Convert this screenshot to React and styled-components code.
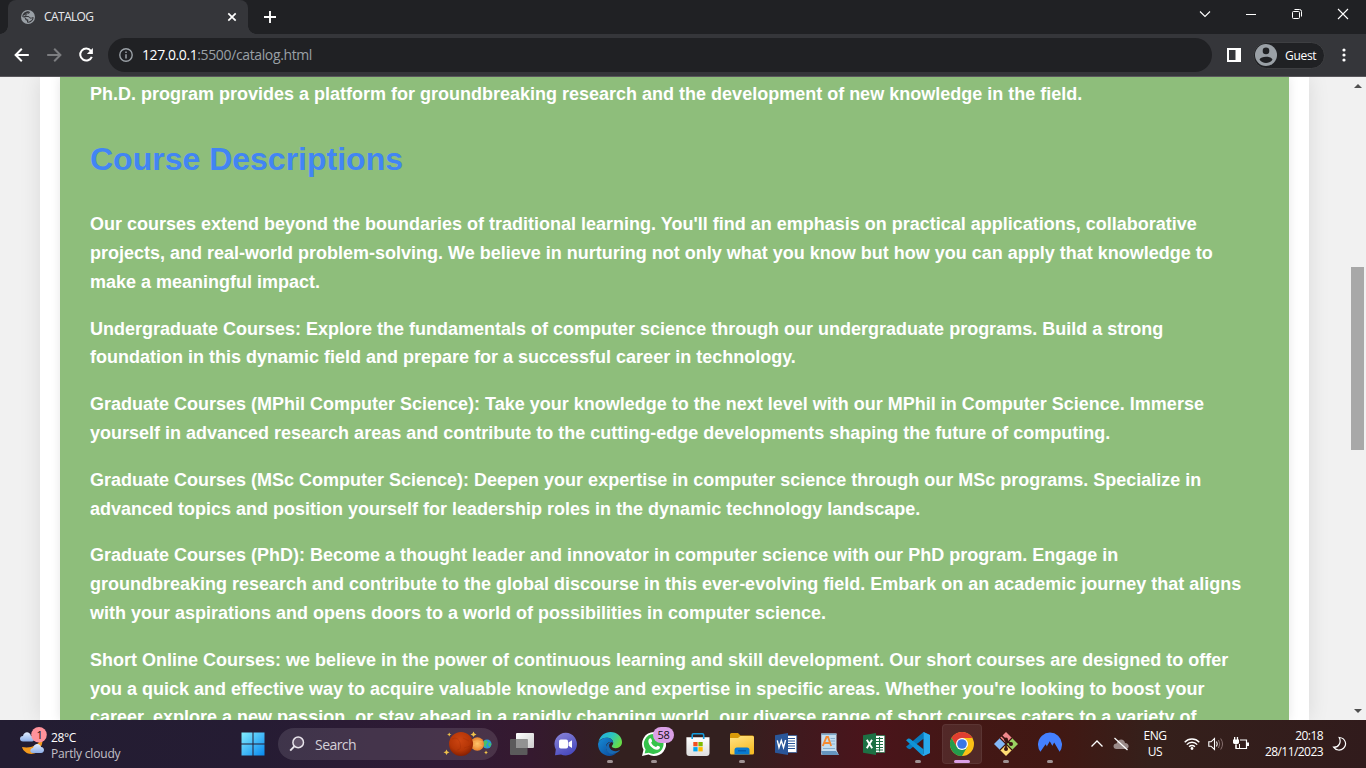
import React from 'react';
import styled, { createGlobalStyle } from 'styled-components';

const GlobalStyle = createGlobalStyle`
  * { box-sizing: border-box; }
  html, body { margin: 0; padding: 0; overflow: hidden; }
  body { font-family: "Open Sans", "Noto Sans", sans-serif; }
  svg { display: block; flex: none; }
`;

const Screen = styled.div`
  width: 1366px;
  height: 768px;
  display: flex;
  flex-direction: column;
  overflow: hidden;
`;

/* Browser chrome */
const TabStrip = styled.header`
  height: 34px;
  flex: none;
  display: flex;
  align-items: stretch;
  background: #202124;
  padding-left: 8px;
`;
const Tab = styled.div`
  position: relative;
  width: 240px;
  display: flex;
  align-items: center;
  padding: 0 10px 0 12px;
  background: #35363a;
  border-radius: 8px 8px 0 0;
  color: #e8eaed;
  font-size: 12px;
  &::before, &::after {
    content: "";
    position: absolute;
    bottom: 0;
    width: 8px;
    height: 8px;
  }
  &::before { left: -8px; background: radial-gradient(circle at 0 0, #202124 7.5px, #35363a 8px); }
  &::after { right: -8px; background: radial-gradient(circle at 100% 0, #202124 7.5px, #35363a 8px); }
`;
const TabTitle = styled.span`
  flex: 1;
  margin-left: 8px;
  padding-bottom: 1px;
  line-height: 16px;
  letter-spacing: -0.6px;
`;
const NewTab = styled.div`
  display: flex;
  align-items: center;
  margin-left: 15px;
`;
const WindowControls = styled.div`
  margin-left: auto;
  display: flex;
  height: 28px;
`;
const WindowButton = styled.div`
  width: 46px;
  display: grid;
  place-items: center;
`;
const Toolbar = styled.div`
  height: 43px;
  flex: none;
  display: flex;
  align-items: center;
  background: #35363a;
  border-bottom: 1px solid #59575c;
  padding-left: 14px;
`;
const NavIcons = styled.div`
  display: flex;
  gap: 16px;
`;
const AddressBar = styled.div`
  width: 1104px;
  height: 34px;
  margin-left: 14px;
  padding-left: 10px;
  border-radius: 17px;
  background: #202124;
  display: flex;
  align-items: center;
  gap: 8px;
`;
const Url = styled.span`
  font-size: 14px;
  line-height: 20px;
  letter-spacing: -0.37px;
  color: #9aa0a6;
`;
const Host = styled.span`
  color: #fff;
  letter-spacing: -0.42px;
`;
const Profile = styled.div`
  width: 72px;
  height: 27px;
  margin: 0 16px 0 12px;
  border: 1px solid #3e3f42;
  border-radius: 14px;
  background: #202124;
  color: #fff;
  font-size: 12px;
  display: flex;
  align-items: center;
  gap: 8px;
  padding-left: 1px;
  letter-spacing: -0.3px;
`;
const PanelIcon = styled.div`margin-left: 15px;`;

/* Page */
const Viewport = styled.main`
  height: 643px;
  flex: none;
  display: flex;
  background: #f1f1f1;
  overflow: hidden;
`;
const PageArea = styled.div`
  flex: 1;
  padding: 0 40px;
  overflow: hidden;
`;
const Sheet = styled.div`
  height: 643px;
  padding: 0 20px;
  background: #fff;
  box-shadow: 0 0 20px rgba(0, 0, 0, 0.1);
`;
const Catalog = styled.article`
  height: 643px;
  padding: 2.6px 30px 0;
  background: #8ebe7b;
  box-shadow: 0 0 10px rgba(0, 0, 0, 0.1);
  color: #fff;
  font: bold 18px/28.8px "Liberation Sans", Arial, sans-serif;
  overflow: hidden;
`;
const Heading = styled.h2`
  margin: 26px 0 24.6px;
  color: #4285f4;
  font-size: 32px;
  line-height: 51.2px;
`;
const Paragraph = styled.p`
  margin: 0 0 18px;
`;
const Scrollbar = styled.div`
  width: 17px;
  flex: none;
  background: #f1f1f1;
  display: flex;
  flex-direction: column;
  align-items: center;
  padding: 7px 0 7px;
`;
const Arrow = styled.div`
  width: 0;
  height: 0;
  border: 4px solid transparent;
  border-${(p) => (p.$up ? 'bottom' : 'top')}: 4px solid #505050;
  border-${(p) => (p.$up ? 'top' : 'bottom')}-width: 0;
`;
const Thumb = styled.div`
  width: 13px;
  height: 183px;
  margin: 179px 0 auto;
  background: #a8a8a8;
`;

/* Taskbar */
const Taskbar = styled.footer`
  height: 48px;
  flex: none;
  display: flex;
  align-items: center;
  background: linear-gradient(90deg, #231d32 0, #251c33 250px, #301a35 440px, #35192f 530px, #33201f 620px, #33201f 730px, #40191e 800px, #4a141b 870px, #431715 960px, #411813 1060px, #35201b 1150px, #311b1c 1366px);
`;
const Weather = styled.div`
  width: 231px;
  display: flex;
  padding-left: 19px;
  gap: 4px;
  color: #fff;
`;
const WeatherText = styled.div`
  padding-top: 3px;
  font-size: 12px;
  line-height: 16px;
  letter-spacing: -0.35px;
`;
const Condition = styled.div`color: #c3c0c7; letter-spacing: -0.2px;`;
const Slot = styled.div`
  position: relative;
  width: 44px;
  height: 48px;
  flex: none;
  display: grid;
  place-items: center;
`;
const AppList = styled.div`
  display: flex;
  margin-left: 2px;
`;
const ActiveTile = styled.div`
  width: 40px;
  height: 40px;
  display: grid;
  place-items: center;
  border-radius: 4px;
  border: 1px solid rgba(255, 255, 255, 0.06);
  background: rgba(255, 255, 255, 0.08);
`;
const Indicator = styled.span`
  position: absolute;
  bottom: 5px;
  left: 50%;
  width: ${(p) => (p.$active ? 16 : 6)}px;
  height: 3px;
  border-radius: 2px;
  transform: translateX(-50%);
  background: ${(p) => (p.$active ? '#dba0e6' : '#9f9293')};
`;
const Badge = styled.span`
  position: absolute;
  top: 7px;
  left: 21px;
  width: 21px;
  height: 16px;
  border-radius: 8px;
  background: #dba0e6;
  color: #111;
  font-size: 11px;
  line-height: 16px;
  text-align: center;
  letter-spacing: -0.3px;
`;
const SearchBox = styled.div`
  width: 220px;
  height: 32px;
  margin-left: 3px;
  padding: 0 5px 0 11px;
  border-radius: 16px;
  background: rgba(255, 255, 255, 0.115);
  display: flex;
  align-items: center;
  gap: 10px;
  color: #d4d0d8;
  font-size: 14px;
  letter-spacing: -0.55px;
`;
const SearchLabel = styled.span`flex: 1;`;
const Tray = styled.div`
  flex: 1;
  display: flex;
  align-items: center;
  padding-left: 18px;
  color: #fff;
  font-size: 12px;
  line-height: 16px;
`;
const Language = styled.div`
  width: 28px;
  margin: 0 15px 0 12px;
  text-align: center;
  letter-spacing: -0.4px;
`;
const TrayIcons = styled.div`
  display: flex;
  gap: ${(p) => p.$gap}px;
  align-items: center;
`;
const Clock = styled.div`
  width: 62px;
  margin-left: 11px;
  margin-right: 9px;
  text-align: right;
  white-space: nowrap;
  letter-spacing: -0.56px;
`;

const Icon = ({ w = 24, h = w, box, children }) => (
  <svg width={w} height={h} viewBox={box || `0 0 ${w} ${h}`} fill="none">{children}</svg>
);

const GlobeIcon = () => (
  <Icon w={16}>
    <circle cx="8" cy="8" r="7" fill="#9aa0a6" />
    <path d="M8.5 2.2L9.9 2.9C10 4.2 9 4.6 7.7 4.8C7.1 5 7.4 6 6.4 6.4L5 7H8.1C9.4 7 9.4 8.3 10.3 8.6C11.3 8.9 12 8.1 13.7 8.2C13.5 11 11.6 13.1 8.9 13.7L7 13.5V11.6C5.7 11.5 5.1 10.6 5.2 9.4L2.3 7.8C2.3 4.6 4.8 2.2 8.5 2.2Z" fill="#35363a" />
    <path d="M3 8.3C5.8 8.2 6.4 9.1 6.6 10.3L8.3 10.5V13L11.7 11L12.6 8.9L10.8 9.8C9.3 9.5 9.3 8.1 8.1 8.1H4L3.4 6.6L6 5.5C6.5 4.4 6.8 3.9 8.8 3.4" fill="#9aa0a6" />
  </Icon>
);
const BackIcon = ({ forward }) => (
  <Icon w={16}>
    <path d={forward ? 'M1.2 8H14M8.2 1.8L14.4 8L8.2 14.2' : 'M14.8 8H2M7.8 1.8L1.6 8L7.8 14.2'} stroke={forward ? '#7c7d80' : '#fff'} strokeWidth="2" />
  </Icon>
);
const ReloadIcon = () => (
  <Icon w={16}>
    <path d="M12.9 3.8A6 6 0 1 0 13.8 9.8" stroke="#fff" strokeWidth="2" />
    <path d="M14.9 1V7H8.9Z" fill="#fff" />
  </Icon>
);
const InfoIcon = () => (
  <Icon w={16}>
    <circle cx="8" cy="8" r="6.2" stroke="#9aa0a6" strokeWidth="1.4" />
    <path d="M8 7.2V11.4M8 4.6V6.1" stroke="#9aa0a6" strokeWidth="1.5" />
  </Icon>
);
const AvatarIcon = () => (
  <Icon w={22}>
    <circle cx="11" cy="11" r="11" fill="#9aa0a6" />
    <circle cx="11" cy="6.9" r="3.3" fill="#202124" />
    <path d="M4.5 15.5C6 11.8 16 11.8 17.5 15.5C15 20 7 20 4.5 15.5Z" fill="#202124" />
  </Icon>
);

const WeatherIcon = () => (
  <Icon w={28} h={32}>
    <defs><linearGradient id="cl" x2="0" y2="1"><stop stopColor="#e2edff" /><stop offset="1" stopColor="#8caee8" /></linearGradient></defs>
    <path d="M22 11C21 17 13 22 3 20C5 28 17 30 21 21C24 17 24 13 22 11Z" fill="#f49a1d" />
    <path d="M4 14.5C0 14.5 0 9 4 9C5 4 11 4 12 9C16 9 16 14.5 13 14.5Z" fill="url(#cl)" />
    <path d="M14 26C10 26 11 21 14 21C15 16 21 16 22 20C26 20 26 26 22 26Z" fill="url(#cl)" />
    <circle cx="20" cy="7.8" r="7.8" fill="#ff929b" />
    <text x="20.7" y="11.8" fill="#111" fontSize="11" textAnchor="middle" fontFamily="Open Sans">1</text>
  </Icon>
);
const StartIcon = () => (
  <Icon w={24}>
    <defs><linearGradient id="win" x2="1" y2="1"><stop stopColor="#83edff" /><stop offset="1" stopColor="#0788ef" /></linearGradient></defs>
    <path d="M.5 .5H11.5V11.5H.5ZM12.5 .5H23.5V11.5H12.5ZM.5 12.5H11.5V23.5H.5ZM12.5 12.5H23.5V23.5H12.5Z" fill="url(#win)" />
  </Icon>
);
const MagnifierIcon = () => (
  <Icon w={16}>
    <circle cx="9.2" cy="6.4" r="5.3" stroke="#e8e4eb" strokeWidth="1.5" fill="#605268" />
    <path d="M5.3 10.3L1.2 14.6" stroke="#e8e4eb" strokeWidth="1.9" />
  </Icon>
);
const PlanetsIcon = () => (
  <Icon w={50} h={28}>
    <defs>
      <radialGradient id="mars" cx=".45" cy=".35" r=".7"><stop stopColor="#cd4511" /><stop offset=".6" stopColor="#b53607" /><stop offset="1" stopColor="#7d1b00" /></radialGradient>
      <radialGradient id="ven"><stop stopColor="#ffc96e" /><stop offset="1" stopColor="#e9822c" /></radialGradient>
    </defs>
    <circle cx="44" cy="14" r="4.5" fill="#2997db" />
    <path d="M40 12L43 10L45 12L43 15L44 18L41 16ZM46 12L48.5 14L47 17L45 15Z" fill="#45bf69" />
    <circle cx="34.3" cy="14" r="6.8" fill="url(#ven)" />
    <path d="M29.5 12Q34 10 39.5 12M29.5 16Q35 14 39.5 16" stroke="#f7ae58" strokeWidth=".8" />
    <circle cx="18" cy="14" r="12" fill="url(#mars)" />
    <path d="M9 9Q15 6 17 13T14 20M20 8L26 11M21 18L27 16" stroke="#8c2504" opacity=".22" />
    <path d="M6.2 2.5L7 4L8.5 4.5L7 5L6.2 6.5L5.5 5L4 4.5L5.5 4ZM30.5 1.5L31.5 3.5L33.5 4.5L31.5 5.5L30.5 7L29.5 5.5L27.5 4.5L29.5 3.5ZM3.5 19.5L4.5 21.5L6.5 22.3L4.5 23.2L3.5 25L2.5 23.2L.5 22.3L2.5 21.5ZM43 20.5L43.8 22L45 22.5L43.8 23L43 24.5L42.3 23L41 22.5L42.3 22Z" fill="#efc14a" />
  </Icon>
);
const TaskViewIcon = () => (
  <Icon>
    <defs><linearGradient id="tv" x2="1" y2="1"><stop stopColor="#fff" /><stop offset="1" stopColor="#ccc" /></linearGradient></defs>
    <rect x="6" y="1" width="18" height="15" rx="1" fill="url(#tv)" />
    <rect x="0" y="7" width="17.5" height="16" rx="1" fill="#5b5a5b" />
    <path d="M6 7H17.5V16H6Z" fill="#929292" />
  </Icon>
);
const ChatIcon = () => (
  <Icon>
    <defs><linearGradient id="ch" x2=".5" y2="1"><stop stopColor="#8c86d8" /><stop offset="1" stopColor="#4b4cc0" /></linearGradient></defs>
    <path d="M12 .8A11.3 11.3 0 1 1 7 22.4L1 23.3L1.8 17.5A11.3 11.3 0 0 1 12 .8Z" fill="url(#ch)" />
    <rect x="5" y="7.5" width="9" height="9" rx="1.8" fill="#fff" />
    <path d="M14.5 10.5L18 8.2V16L14.5 13.7Z" fill="#fff" />
  </Icon>
);
const EdgeIcon = () => (
  <Icon>
    <defs>
      <linearGradient id="eg" x2="1" y2=".5"><stop stopColor="#1fa8e8" /><stop offset=".55" stopColor="#2cc5c0" /><stop offset="1" stopColor="#66dc48" /></linearGradient>
      <linearGradient id="eb" x2="1" y2="1"><stop stopColor="#168bd5" /><stop offset="1" stopColor="#0b4698" /></linearGradient>
    </defs>
    <path d="M.4 10C2 3.5 7 0 12.5 0C19 0 24 4.6 24 10C24 14 21 16.2 17.8 16.2C15 16.2 13.8 15.1 13.8 14.3C13.8 13.5 15.2 13 15.2 11C15.2 8 12.4 5.8 8.8 5.8C5 5.8 1.7 7.8.4 10Z" fill="url(#eg)" />
    <path d="M.1 11.5C1.5 7.6 5 5.8 8.8 5.8C12.5 5.8 15.2 8 15.2 11C13 9 8 10 8 15C8 20 13 23 18 21.3C16 23 14 24 11.5 24C5 24-.5 18.5.1 11.5Z" fill="url(#eb)" />
    <path d="M13.3 9.8C9 11 7.3 14 8.3 17.5C9.8 22.5 15.5 23.8 21.6 18.7C22 18.3 21.6 18 21.2 18.2C15.5 21 10.2 17 11.2 12.5Z" fill="#1769b3" />
  </Icon>
);
const WhatsAppIcon = () => (
  <Icon>
    <path d="M12 0A12 12 0 1 1 6.5 22.6L0 24L1.5 17.8A12 12 0 0 1 12 0Z" fill="#fff" />
    <path d="M12 1.9A10 10 0 1 1 6.8 20.7L2.6 21.6L3.6 17.5A10 10 0 0 1 12 1.9Z" fill="#35c34b" />
    <path d="M8.1 6.3C9.4 6 9.7 7.7 10.1 8.9C10.3 9.6 9 10.3 9.2 10.8C10.2 13 11.8 14.3 13.9 15C14.4 15.1 15 13.8 15.6 13.7C16.2 13.6 18 14.5 18 15.1C18 17 16.3 17.9 14.8 17.7C11 17.2 7 13.5 6.4 9.9C6.2 8.3 7 6.6 8.1 6.3Z" fill="#fff" />
  </Icon>
);
const StoreIcon = () => (
  <Icon>
    <defs><linearGradient id="st" x2="0" y2="1"><stop stopColor="#fff" /><stop offset="1" stopColor="#dedede" /></linearGradient></defs>
    <path d="M.4 5.2H23.5V21Q23.5 24 20.5 24H3.4Q.4 24 .4 21Z" fill="url(#st)" />
    <path d="M6.2 7V3Q6.2 1.7 7.5 1.7H16.4Q17.7 1.7 17.7 3V7" stroke="#159dde" strokeWidth="1.6" />
    <path d="M7.3 10H11.6V14.3H7.3Z" fill="#f25022" /><path d="M12.4 10H16.7V14.3H12.4Z" fill="#7fba00" />
    <path d="M7.3 15.1H11.6V19.4H7.3Z" fill="#00a4ef" /><path d="M12.4 15.1H16.7V19.4H12.4Z" fill="#ffb900" />
  </Icon>
);
const FolderIcon = () => (
  <Icon>
    <defs><linearGradient id="fo" x2=".5" y2="1"><stop stopColor="#ffe486" /><stop offset="1" stopColor="#f8bd28" /></linearGradient></defs>
    <path d="M0 2.5Q0 1 1.5 1H8L10.5 3.5H22.5Q24 3.5 24 5V12H0Z" fill="#d99a09" />
    <path d="M0 6H8L10.5 4H22.5Q24 4 24 5.5V21Q24 22.5 22.5 22.5H1.5Q0 22.5 0 21Z" fill="url(#fo)" />
    <path d="M4.5 22.5V18Q4.5 15.5 7 15.5H17Q19.5 15.5 19.5 18V22.5Z" fill="#087bd0" />
    <path d="M8 18.8H16" stroke="#0656a4" strokeWidth="1.2" />
  </Icon>
);
const OfficeIcon = ({ excel }) => {
  const c = excel ? '#1d7044' : '#2a5699';
  return (
    <Icon>
      <rect x="11" y="3.5" width="11.8" height="17" fill="#fff" stroke={c} strokeWidth=".7" />
      {excel
        ? <path d="M14 6.5H21M14 9.5H21M14 12.5H21M14 15.5H21M14 18H21M17.5 5V19.5" stroke={c} strokeWidth="1.1" />
        : <path d="M14 6.5H21M14 9H21M14 11.5H21M14 14H21M14 16.5H21" stroke={c} strokeWidth="1.1" />}
      <path d="M1 3.2L14 1V23L1 20.8Z" fill={c} />
      <path d={excel ? 'M4.8 7.8L10.2 16.2M10 7.8L4.8 16.2' : 'M3.3 8.3L5 15.5L7.3 8.5L9.5 15.5L11.6 8'} stroke="#fff" strokeWidth={excel ? 1.9 : 1.4} />
    </Icon>
  );
};
const WordPadIcon = () => (
  <Icon>
    <path d="M3.2 1.5H18.5V18L20.8 22.7H3.2Z" fill="#c3ddf0" /><path d="M3.2 1.5H18.5V3H3.2Z" fill="#7fa9c9" />
    <path d="M3 19H18L21 23H4.5Z" fill="#6595bf" />
    <path d="M4.8 14L8.5 5H10L13.2 14M6.2 11H12" stroke="#f58a32" strokeWidth="1.9" />
    <path d="M12.5 6.5H17M12.5 9H17M13.5 12H17M5 16.5H17" stroke="#88afd0" />
  </Icon>
);
const CodeIcon = () => (
  <Icon>
    <path d="M17.5 0L24 3V21L17.5 24V6.8L4 17.3L1.8 16.4L0 14.8Z" fill="#087abd" />
    <path d="M0 8.3L2.2 6.5L4 6.7L17.5 17.2V24L15.5 22.8Z" fill="#1093d5" />
    <path d="M17.5 0L24 3V21L17.5 24L16.3 22.8L17.7 22V2Z" fill="#28a9ec" />
  </Icon>
);
const ChromeIcon = () => (
  <Icon>
    <circle cx="12" cy="12" r="12" fill="#fbc116" />
    <path d="M1.6 6A12 12 0 0 1 22.4 6H12L6.8 15Z" fill="#df3e31" />
    <path d="M1.6 6A12 12 0 0 0 12 24L17.2 15H6.8Z" fill="#249b4c" />
    <circle cx="12" cy="12" r="6" fill="#fff" /><circle cx="12" cy="12" r="4.8" fill="#3977e8" />
  </Icon>
);
const GitIcon = () => (
  <Icon>
    <path d="M12 0L18 6L12 12L6 6Z" fill="#f1888c" /><path d="M18 6L24 12L18 18L12 12Z" fill="#9bd262" />
    <path d="M6 6L12 12L6 18L0 12Z" fill="#83b8f8" /><path d="M12 12L18 18L12 24L6 18Z" fill="#ffdc73" />
    <path d="M7 3L12 8V18M12 8L17.5 12.5" stroke="#3b1612" strokeWidth="1.7" />
    <path d="M6 6L18 18M18 6L6 18" stroke="#3b1612" strokeWidth="1.1" />
    <circle cx="12" cy="7.5" r="2" fill="#3b1612" /><circle cx="17" cy="12" r="2" fill="#3b1612" /><circle cx="12" cy="17" r="2" fill="#3b1612" />
  </Icon>
);
const NordIcon = () => (
  <Icon>
    <path d="M2.4 19.8A12 12 0 1 1 21.6 19.8L16.2 10.6L14.4 13.7L15 15L11.8 9.3L8.9 14.3L9.5 15.5L7.6 12.2Z" fill="#4480ff" />
  </Icon>
);

const apps = [
  { id: 'taskview', icon: <TaskViewIcon /> },
  { id: 'chat', icon: <ChatIcon /> },
  { id: 'edge', icon: <EdgeIcon />, running: true },
  { id: 'whatsapp', icon: <WhatsAppIcon />, running: true, badge: '58' },
  { id: 'store', icon: <StoreIcon /> },
  { id: 'files', icon: <FolderIcon />, running: true },
  { id: 'word', icon: <OfficeIcon /> },
  { id: 'wordpad', icon: <WordPadIcon /> },
  { id: 'excel', icon: <OfficeIcon excel /> },
  { id: 'code', icon: <CodeIcon />, running: true },
  { id: 'chrome', icon: <ChromeIcon />, running: true, active: true },
  { id: 'git', icon: <GitIcon />, running: true },
  { id: 'nord', icon: <NordIcon />, running: true },
];

const courses = [
  "Our courses extend beyond the boundaries of traditional learning. You'll find an emphasis on practical applications, collaborative projects, and real-world problem-solving. We believe in nurturing not only what you know but how you can apply that knowledge to make a meaningful impact.",
  'Undergraduate Courses: Explore the fundamentals of computer science through our undergraduate programs. Build a strong foundation in this dynamic field and prepare for a successful career in technology.',
  'Graduate Courses (MPhil Computer Science): Take your knowledge to the next level with our MPhil in Computer Science. Immerse yourself in advanced research areas and contribute to the cutting-edge developments shaping the future of computing.',
  'Graduate Courses (MSc Computer Science): Deepen your expertise in computer science through our MSc programs. Specialize in advanced topics and position yourself for leadership roles in the dynamic technology landscape.',
  'Graduate Courses (PhD): Become a thought leader and innovator in computer science with our PhD program. Engage in groundbreaking research and contribute to the global discourse in this ever-evolving field. Embark on an academic journey that aligns with your aspirations and opens doors to a world of possibilities in computer science.',
  "Short Online Courses: we believe in the power of continuous learning and skill development. Our short courses are designed to offer you a quick and effective way to acquire valuable knowledge and expertise in specific areas. Whether you're looking to boost your career, explore a new passion, or stay ahead in a rapidly changing world, our diverse range of short courses caters to a variety of",
];

export default function App() {
  return (
    <Screen>
      <GlobalStyle />
      <TabStrip>
        <Tab>
          <GlobeIcon />
          <TabTitle>CATALOG</TabTitle>
          <Icon w={12}><path d="M2.3 2.3L9.7 9.7M9.7 2.3L2.3 9.7" stroke="#fff" strokeWidth="1.7" /></Icon>
        </Tab>
        <NewTab><Icon w={14}><path d="M7 1V13M1 7H13" stroke="#fff" strokeWidth="1.9" /></Icon></NewTab>
        <WindowControls>
          <WindowButton><Icon w={12}><path d="M1 3.5L6 8.5L11 3.5" stroke="#fff" strokeWidth="1.1" /></Icon></WindowButton>
          <WindowButton><Icon w={12}><path d="M1 6.5H11" stroke="#fff" /></Icon></WindowButton>
          <WindowButton><Icon w={12}><rect x="1.5" y="3.5" width="7" height="7" rx="1" stroke="#fff" /><path d="M3.5 1.5H8.5Q10.5 1.5 10.5 3.5V8.5" stroke="#fff" /></Icon></WindowButton>
          <WindowButton><Icon w={12}><path d="M1 1L11 11M11 1L1 11" stroke="#fff" strokeWidth="1.1" /></Icon></WindowButton>
        </WindowControls>
      </TabStrip>
      <Toolbar>
        <NavIcons><BackIcon /><BackIcon forward /><ReloadIcon /></NavIcons>
        <AddressBar>
          <InfoIcon />
          <Url><Host>127.0.0.1</Host>:5500/catalog.html</Url>
        </AddressBar>
        <PanelIcon><Icon w={14}><rect x="1" y="1" width="12" height="12" stroke="#fff" strokeWidth="2" /><path d="M8.5 1H13V13H8.5Z" fill="#fff" /></Icon></PanelIcon>
        <Profile><AvatarIcon />Guest</Profile>
        <Icon w={6} h={16}><circle cx="3" cy="3" r="1.6" fill="#fff" /><circle cx="3" cy="8" r="1.6" fill="#fff" /><circle cx="3" cy="13" r="1.6" fill="#fff" /></Icon>
      </Toolbar>
      <Viewport>
        <PageArea>
          <Sheet>
            <Catalog>
              <div>Ph.D. program provides a platform for groundbreaking research and the development of new knowledge in the field.</div>
              <Heading>Course Descriptions</Heading>
              {courses.map((text) => <Paragraph key={text.slice(0, 30)}>{text}</Paragraph>)}
            </Catalog>
          </Sheet>
        </PageArea>
        <Scrollbar><Arrow $up /><Thumb /><Arrow /></Scrollbar>
      </Viewport>
      <Taskbar>
        <Weather>
          <WeatherIcon />
          <WeatherText>28°C<Condition>Partly cloudy</Condition></WeatherText>
        </Weather>
        <Slot><StartIcon /></Slot>
        <SearchBox>
          <MagnifierIcon />
          <SearchLabel>Search</SearchLabel>
          <PlanetsIcon />
        </SearchBox>
        <AppList>
          {apps.map((app) => (
            <Slot key={app.id}>
              {app.active ? <ActiveTile>{app.icon}</ActiveTile> : app.icon}
              {app.badge && <Badge>{app.badge}</Badge>}
              {app.running && <Indicator $active={app.active} />}
            </Slot>
          ))}
        </AppList>
        <Tray>
          <TrayIcons $gap={9}>
            <Icon w={14}><path d="M1.5 9.5L7 4L12.5 9.5" stroke="#fff" strokeWidth="1.3" /></Icon>
            <Icon w={16}><path d="M3.5 13C-.5 13-.5 7.5 3.5 7.5C5 2 11.5 2.5 12 7C16.5 7 17 13 12.5 13Z" fill="#9b8b89" /><path d="M1.5 2L14.5 14" stroke="#fff" strokeWidth="1.2" /></Icon>
          </TrayIcons>
          <Language>ENG<br />US</Language>
          <TrayIcons $gap={8}>
            <Icon w={16}><path d="M.7 6.2A10 10 0 0 1 15.3 6.2M2.8 8.6A7 7 0 0 1 13.2 8.6M5.1 10.8A4 4 0 0 1 10.9 10.8" stroke="#fff" strokeWidth="1.4" /><circle cx="8" cy="12.5" r="1.4" fill="#fff" /></Icon>
            <Icon w={16}><path d="M.8 5.8H3L6.5 2.5V13.5L3 10.2H.8Z" stroke="#fff" strokeWidth="1.1" /><path d="M8.5 5.5Q10 8 8.5 10.5" stroke="#fff" strokeWidth="1.1" /><path d="M10.5 4Q13 8 10.5 12M12.7 2.5Q16.3 8 12.7 13.5" stroke="#87706f" /></Icon>
            <Icon w={18} h={16}><path d="M8 4H14.5V12.5H4V9" stroke="#fff" strokeWidth="1.2" /><path d="M15 6.5H17V10H15Z" fill="#fff" /><path d="M1 3.5H7V6.5Q7 8 4 8Q1 8 1 6.5ZM2 1H3.3V4H2ZM4.8 1H6.1V4H4.8Z" fill="#fff" /><path d="M4 8V12.5H7.5V8" stroke="#fff" /></Icon>
          </TrayIcons>
          <Clock>20:18<br />28/11/2023</Clock>
          <Icon w={16}><path d="M7.2 1.5C13.5 2 15.4 8.5 11.5 12.2C8.5 15 3.8 14.5 1.6 11.2C6.5 11.5 9.8 6.5 7.2 1.5Z" stroke="#fff" strokeWidth="1.2" /></Icon>
        </Tray>
      </Taskbar>
    </Screen>
  );
}
